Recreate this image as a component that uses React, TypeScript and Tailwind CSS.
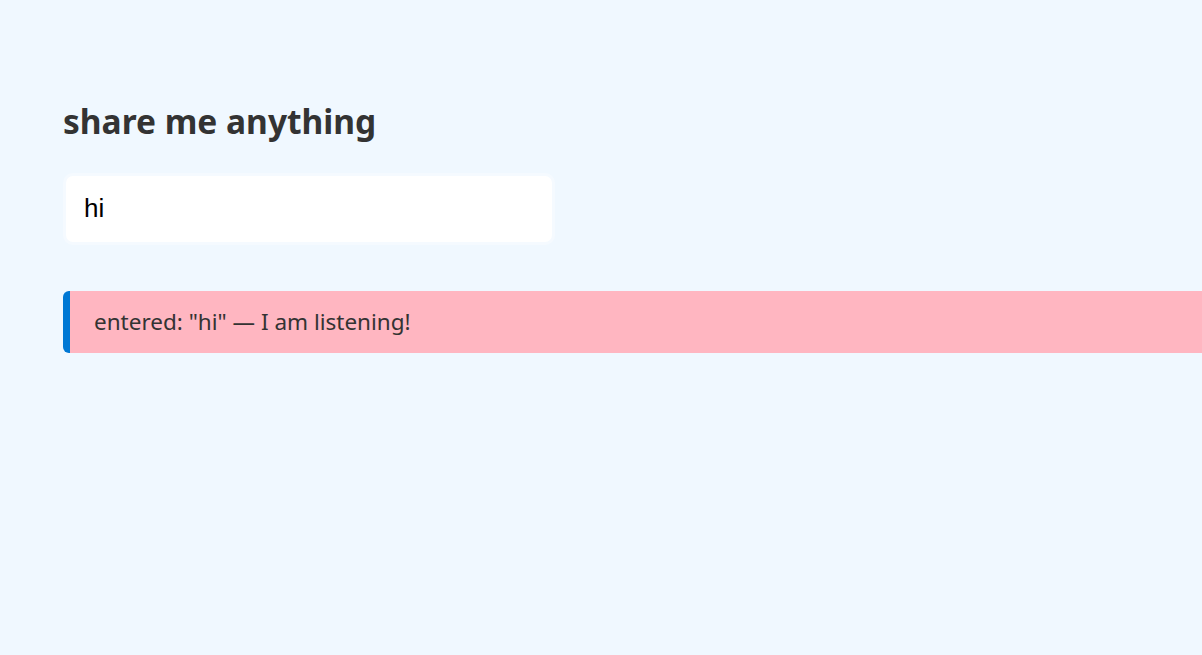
export default function App() {
    return (
        <div className="min-h-[655px] bg-[#f0f8ff] pl-[63px] pt-[100px] font-['Segoe_UI','Noto_Sans',sans-serif] text-[#333]">
            <h1 className="text-[33.5px] font-bold leading-[1.3]">share me anything</h1>
            <input
                className="mt-[29px] block h-[72px] w-[492px] rounded-[10px] border-[3px] border-[#f5faff] bg-white px-[18px] font-['Liberation_Sans',Arial,sans-serif] text-[26px] text-black outline-none"
                defaultValue="hi"
            />
            <div className="mt-[46px] flex h-[62px] items-center rounded-l-[6px] border-l-[7px] border-[#0078d4] bg-[#ffb6c1] pl-[24px] text-[22.5px]">
                entered: "hi" — I am listening!
            </div>
        </div>
    );
}
